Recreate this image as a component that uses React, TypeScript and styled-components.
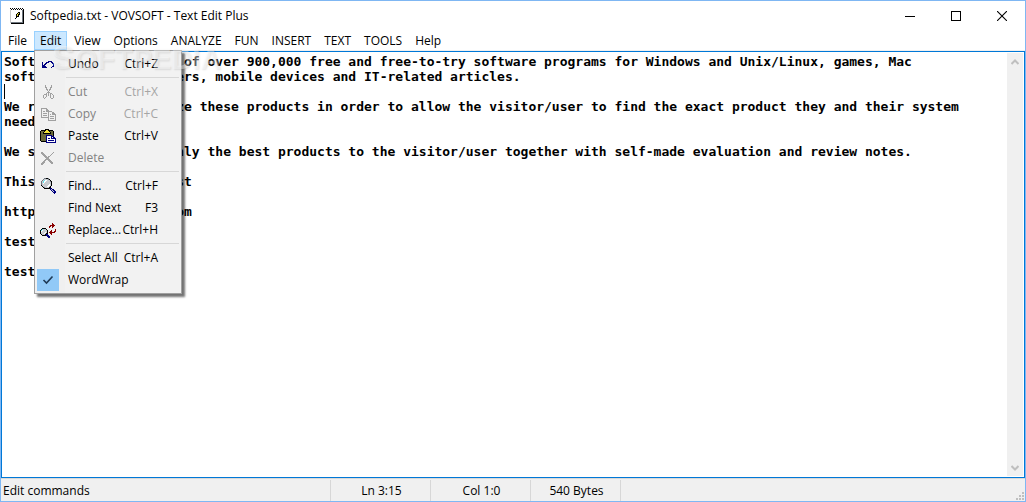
import React, { useState } from "react";
import styled, { createGlobalStyle, css } from "styled-components";

const GlobalStyle = createGlobalStyle`
  * { box-sizing: border-box; }
  html, body { margin: 0; padding: 0; }
  body { background: #fff; }
  body, button, textarea {
    font-family: "Open Sans", "Noto Sans", sans-serif;
    font-size: 12px;
    line-height: 16px;
    color: #000;
  }
  button { border: 0; padding: 0; background: none; }
`;

const Window = styled.div`
  position: relative;
  display: flex;
  flex-direction: column;
  min-height: 100vh;
  border: 1px solid #7fb7f3;
  background: #fff;
`;

const TitleBar = styled.header`
  display: flex;
  align-items: center;
  height: 30px;
  padding-left: 9px;
`;

const Title = styled.h1`
  flex: 1;
  margin: 0 0 0 6px;
  font-size: 12px;
  font-weight: 400;
  line-height: 16px;
`;

const CaptionButton = styled.button`
  display: flex;
  align-items: center;
  justify-content: center;
  width: 46px;
  height: 29px;
`;

const MenuBar = styled.nav`
  display: flex;
  gap: 1px;
  height: 20px;
  padding-left: 1px;
  border-bottom: 1px solid #f0f0f0;
`;

const MenuSlot = styled.div`
  position: relative;
`;

const MenuTitle = styled.button<{ $open?: boolean }>`
  height: 19px;
  padding: 0 5px;
  border: 1px solid transparent;
  line-height: 17px;
  white-space: nowrap;
  ${(p) => p.$open && css`
    background: #cce8ff;
    border-color: #99d1ff;
  `}
`;

const Popup = styled.div`
  position: absolute;
  z-index: 2;
  top: 19px;
  left: 0;
  width: 148px;
  padding: 2px;
  border: 1px solid #a0a0a0;
  background: linear-gradient(to right, #f0f0f0 30px, #f2f2f2 30px);
  box-shadow: 3px 3px 2px rgba(0, 0, 0, 0.55);
`;

const Item = styled.button`
  display: grid;
  grid-template-columns: 22px 1fr auto;
  align-items: center;
  width: 100%;
  height: 22px;
  padding-right: 21px;
  text-align: left;
  white-space: nowrap;
  &:disabled { color: #838383; }
`;

const IconCell = styled.span<{ $checked?: boolean }>`
  display: flex;
  align-items: center;
  justify-content: center;
  height: 22px;
  background: ${(p) => (p.$checked ? "#91c9f7" : "transparent")};
`;

const ItemLabel = styled.span`
  padding-left: 9px;
`;

const Shortcut = styled.span`
  button:disabled & { color: #a5a5a5; }
`;

const Divider = styled.hr`
  height: 6px;
  margin: 0 0 0 29px;
  border: 0;
  background: linear-gradient(#d7d7d7, #d7d7d7) 0 2px / 100% 1px no-repeat;
`;

const Editor = styled.main`
  position: relative;
  display: flex;
  flex: 1;
  padding: 1px;
  border: 1px solid #0078d7;
`;

const TextArea = styled.textarea`
  flex: 1;
  min-width: 0;
  padding: 1px;
  border: 0;
  outline: 0;
  resize: none;
  overflow: hidden;
  background: #fff;
  font-family: "DejaVu Sans Mono", monospace;
  font-size: 13px;
  font-weight: 700;
  line-height: 15px;
  white-space: pre;
`;

const Caret = styled.span`
  position: absolute;
  top: 32px;
  left: 2px;
  width: 1px;
  height: 15px;
  background: #000;
`;

const ScrollTrack = styled.div`
  display: flex;
  flex-direction: column;
  justify-content: space-between;
  width: 16px;
  background: #f0f0f0;
`;

const ScrollButton = styled.button`
  display: flex;
  align-items: center;
  justify-content: center;
  height: 17px;
`;

const StatusBar = styled.footer`
  display: flex;
  align-items: stretch;
  height: 23px;
  padding-top: 1px;
  border-top: 1px solid #d9d9d9;
  background: #f0f0f0;
`;

const StatusCell = styled.div<{ $width: number }>`
  width: ${(p) => p.$width}px;
  padding-left: 2px;
  border-right: 1px solid #d7d7d7;
  line-height: 21px;
  text-align: ${(p) => (p.$width > 200 ? "left" : "center")};
`;

const GripCell = styled.div`
  display: flex;
  flex: 1;
  align-items: flex-end;
  justify-content: flex-end;
  padding: 0 1px 1px 0;
`;

const Watermark = styled.div`
  position: absolute;
  z-index: 3;
  top: 38px;
  left: 51px;
  font: 700 29px/36px "Liberation Sans", sans-serif;
  color: rgba(255, 255, 255, 0.4);
  text-shadow: 1px 1px 2px rgba(0, 0, 0, 0.1);
  pointer-events: none;
  &::first-letter { font-size: 34px; }
`;

const palette: Record<string, string> = {
  "#": "#000000",
  n: "#000080",
  g: "#a0a0a0",
  l: "#c6c6c6",
  d: "#6b6b3a",
  y: "#f2e63a",
  w: "#ffffff",
  c: "#5fe8f0",
  s: "#c8ccd0",
  m: "#707880",
  r: "#8b0000",
};

function PixelIcon({ rows }: { rows: string[] }) {
  return (
    <svg width={rows[0].length} height={rows.length} shapeRendering="crispEdges" aria-hidden="true">
      {rows.flatMap((row, y) =>
        [...row].map((ch, x) =>
          palette[ch] ? <rect key={`${x}-${y}`} x={x} y={y} width="1" height="1" fill={palette[ch]} /> : null
        )
      )}
    </svg>
  );
}

const appIcon = [
  "#.#.#.#.#.#.#.",
  ".#.#.#.#.#.#.#",
  "lwwwwwwwwwwwm#",
  "lwwwwwwwwwwwm#",
  "lwwwwwww##wwm#",
  "lwwwwww#y#wwm#",
  "lwwwww#y##wwm#",
  "lwwwww#y#wwwm#",
  "lwwwww###wwwm#",
  "lwwwww#wwwwwm#",
  "lwwww#wwwwwwm#",
  "lwwwwwwwwwwwm#",
  "lwwwwwwwwwwwm#",
  "lwwwwwwwwwwwm#",
  "lmmmmmmmmmmmm#",
  ".#############",
];
const undoIcon = [
  "......nnnn..",
  "n...nnn..nn.",
  "n..nn.....nn",
  "n.nn.......n",
  "nnn........n",
  "nnnn......nn",
  "nnnnn....n..",
];
const cutIcon = [
  "..g.....g..",
  "..g.....g..",
  "..gg...gg..",
  "...g...g...",
  "...gg.gg...",
  "....g.g....",
  ".....g.....",
  "....ggg....",
  "...g.g.gg..",
  ".ggg.g.g.g.",
  "g..g.g.g..g",
  "g..g...g..g",
  "g.g....g..g",
  ".g......gg.",
];
const copyIcon = [
  "gggggg.........",
  "g....gg........",
  "g....ggg.......",
  "g.gg.gggggg....",
  "g......g...gg..",
  "g.gggg.g...ggg.",
  "g......g.g.gggg",
  "g.gggg.g......g",
  "g......g.gggg.g",
  "gggggggg......g",
  ".......g.gggg.g",
  ".......g......g",
  ".......gggggggg",
];
const pasteIcon = [
  ".....####.......",
  ".#####yy#####...",
  "#ddd#yyyy#ddd#..",
  "#dd#yyyyyy#dd#..",
  "#dd########dd#..",
  "#dddddddddddd#..",
  "#dddddnnnnnnd#..",
  "#dddddnwwwwnnn..",
  "#dddddnwwwwnwnn.",
  "#dddddnwnnwnnnnn",
  "#dddddnwwwwwwwwn",
  "#dddddnwnnnnnnwn",
  ".#####nwwwwwwwwn",
  "......nnnnnnnnnn",
];
const deleteIcon = [
  "gg..........g.",
  "ggg........g..",
  ".ggg......g...",
  "..ggg....g....",
  "...ggg.gg.....",
  "....gggg......",
  ".....ggg......",
  "....ggggg.....",
  "...gg..ggg....",
  "..gg....ggg...",
  ".ggg.....ggg..",
  "ggg.......gg..",
  "gg............",
];
const findIcon = [
  "...mm##m.......",
  "..mssssm#......",
  ".mscwwsss#.....",
  "mscwwssssm#....",
  "mscwssssss#....",
  "mswsssssss#....",
  "msssssssws#....",
  "#sssssswws#....",
  ".#sssswws#.....",
  "..#mssss##.....",
  "...######nn....",
  ".........nsnn..",
  "..........nsnn.",
  "...........nsnn",
  "............nnn",
  ".............n.",
];
const replaceIcon = [
  "............r....",
  "............rr...",
  "..........rrrrr..",
  ".........rr.rr...",
  ".........r..r....",
  "..####...........",
  ".#csss#........r.",
  "#cwssss#...r...r.",
  "#wsssss#..rr..rr.",
  "#ssssws#.rrrrrr..",
  "#sssws##..rr.....",
  ".#sss#nn...r.....",
  "..####nnn........",
  ".......nnn.......",
  "........nn.......",
];

const CheckMark = () => (
  <svg width="12" height="10" fill="none" stroke="#1f3a56" strokeWidth="1.6" aria-hidden="true">
    <path d="M1.5 5 4.5 8 10.5 1.5" />
  </svg>
);

type Entry = { label: string; keys?: string; icon?: string[]; disabled?: boolean; checked?: boolean };

const groups: Entry[][] = [
  [{ label: "Undo", keys: "Ctrl+Z", icon: undoIcon }],
  [
    { label: "Cut", keys: "Ctrl+X", icon: cutIcon, disabled: true },
    { label: "Copy", keys: "Ctrl+C", icon: copyIcon, disabled: true },
    { label: "Paste", keys: "Ctrl+V", icon: pasteIcon },
    { label: "Delete", icon: deleteIcon, disabled: true },
  ],
  [
    { label: "Find...", keys: "Ctrl+F", icon: findIcon },
    { label: "Find Next", keys: "F3" },
    { label: "Replace...", keys: "Ctrl+H", icon: replaceIcon },
  ],
  [
    { label: "Select All", keys: "Ctrl+A" },
    { label: "WordWrap", checked: true },
  ],
];

const menus = ["File", "Edit", "View", "Options", "ANALYZE", "FUN", "INSERT", "TEXT", "TOOLS", "Help"];

const documentText = `Softpedia is a library of over 900,000 free and free-to-try software programs for Windows and Unix/Linux, games, Mac
software, Windows drivers, mobile devices and IT-related articles.

We review and categorize these products in order to allow the visitor/user to find the exact product they and their system
needs.

We strive to deliver only the best products to the visitor/user together with self-made evaluation and review notes.

This is a Softpedia test

http://www.softpedia.com

test

test`;

function EditMenu() {
  return (
    <Popup role="menu">
      {groups.map((group, i) => (
        <React.Fragment key={i}>
          {i > 0 && <Divider />}
          {group.map((entry) => (
            <Item key={entry.label} role="menuitem" disabled={entry.disabled}>
              <IconCell $checked={entry.checked}>
                {entry.icon && <PixelIcon rows={entry.icon} />}
                {entry.checked && <CheckMark />}
              </IconCell>
              <ItemLabel>{entry.label}</ItemLabel>
              {entry.keys && <Shortcut>{entry.keys}</Shortcut>}
            </Item>
          ))}
        </React.Fragment>
      ))}
    </Popup>
  );
}

export default function App() {
  const [open, setOpen] = useState(true);
  return (
    <Window>
      <GlobalStyle />
      <TitleBar>
        <PixelIcon rows={appIcon} />
        <Title>Softpedia.txt - VOVSOFT - Text Edit Plus</Title>
        <CaptionButton aria-label="Minimize">
          <svg width="10" height="10" shapeRendering="crispEdges"><path d="M0 5.5H10" stroke="#000" /></svg>
        </CaptionButton>
        <CaptionButton aria-label="Maximize">
          <svg width="10" height="10" shapeRendering="crispEdges"><rect x=".5" y=".5" width="9" height="9" fill="none" stroke="#000" /></svg>
        </CaptionButton>
        <CaptionButton aria-label="Close">
          <svg width="10" height="10"><path d="M0 0 10 10M10 0 0 10" stroke="#000" strokeWidth="1.1" /></svg>
        </CaptionButton>
      </TitleBar>
      <MenuBar>
        {menus.map((name) => (
          <MenuSlot key={name}>
            <MenuTitle
              $open={name === "Edit" && open}
              onClick={() => setOpen(name === "Edit" && !open)}
            >
              {name}
            </MenuTitle>
            {name === "Edit" && open && <EditMenu />}
          </MenuSlot>
        ))}
      </MenuBar>
      <Editor>
        <TextArea aria-label="Document text" spellCheck={false} defaultValue={documentText} />
        <Caret />
        <ScrollTrack>
          <ScrollButton aria-label="Scroll up">
            <svg width="8" height="6"><path d="M.5 5 4 1.5 7.5 5" fill="none" stroke="#bfbfbf" strokeWidth="2" /></svg>
          </ScrollButton>
          <ScrollButton aria-label="Scroll down">
            <svg width="8" height="6"><path d="M.5 1 4 4.5 7.5 1" fill="none" stroke="#bfbfbf" strokeWidth="2" /></svg>
          </ScrollButton>
        </ScrollTrack>
      </Editor>
      <StatusBar>
        <StatusCell $width={330}>Edit commands</StatusCell>
        <StatusCell $width={100}>Ln 3:15</StatusCell>
        <StatusCell $width={100}>Col 1:0</StatusCell>
        <StatusCell $width={90}>540 Bytes</StatusCell>
        <GripCell>
          <svg width="8" height="8" fill="#bfbfbf" shapeRendering="crispEdges" aria-hidden="true">
            <path d="M6 0h2v2h-2zM3 3h2v2h-2zM6 3h2v2h-2zM0 6h2v2h-2zM3 6h2v2h-2zM6 6h2v2h-2z" />
          </svg>
        </GripCell>
      </StatusBar>
      <Watermark aria-hidden="true">SOFTPEDIA</Watermark>
    </Window>
  );
}
